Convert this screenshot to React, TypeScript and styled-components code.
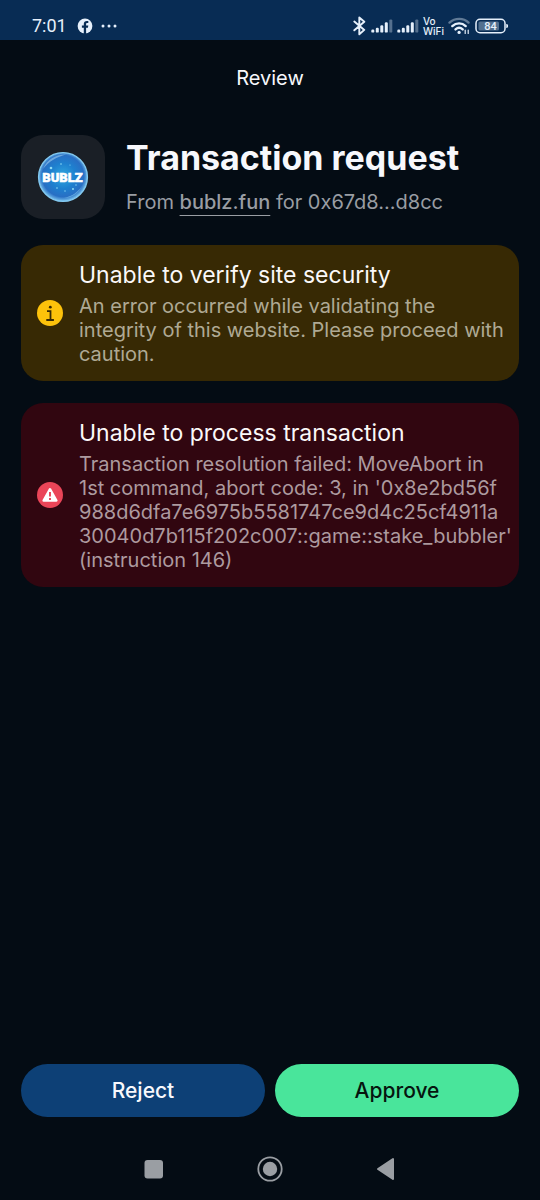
import React from "react";
import styled, { createGlobalStyle } from "styled-components";

const GlobalStyle = createGlobalStyle`
  * { box-sizing: border-box; }
  body {
    margin: 0;
    background: #040c14;
    color: #f7f8fc;
    font-family: Inter, "Liberation Sans", sans-serif;
  }
  h1, h2, p { margin: 0; }
`;

const Screen = styled.div`
  min-height: 100vh;
  display: flex;
  flex-direction: column;
`;

const StatusBar = styled.div`
  height: 40px;
  padding: 11px 31px 0 32px;
  display: flex;
  justify-content: space-between;
  background: #082c54;
  color: #e6f0fb;
  font-family: Roboto, sans-serif;
`;

const StatusGroup = styled.div`
  height: 30px;
  display: flex;
  align-items: center;
  gap: ${(p: { $gap: number }) => p.$gap}px;

  svg { display: block; }
`;

const Clock = styled.span`
  margin-right: 3px;
  font-size: 18px;
  line-height: 30px;
`;

const CallLabel = styled.span`
  font-family: Inter, sans-serif;
  font-size: 10px;
  font-weight: 500;
  line-height: 10px;
`;

const TopBar = styled.header`
  height: 76px;
  display: flex;
  align-items: center;
  justify-content: center;
`;

const TopTitle = styled.h2`
  font-size: 20px;
  font-weight: 400;
  line-height: 24px;
`;

const Content = styled.main`
  flex: 1;
  display: flex;
  flex-direction: column;
  gap: 22px;
  padding: 19px 21px;
`;

const Request = styled.section`
  display: flex;
  align-items: center;
  gap: 21px;
  margin-bottom: 4px;
`;

const AppTile = styled.div`
  flex: none;
  width: 84px;
  height: 84px;
  display: grid;
  place-items: center;
  border-radius: 22px;
  background: #1a1f26;
`;

const RequestText = styled.div`
  display: flex;
  flex-direction: column;
  gap: 10px;
`;

const RequestTitle = styled.h1`
  font-size: 34px;
  font-weight: 700;
  line-height: 40px;
  white-space: nowrap;
`;

const Origin = styled.p`
  color: #999da3;
  font-size: 20px;
  font-variation-settings: "opsz" 24;
  line-height: 28px;
`;

const SiteLink = styled.a`
  color: inherit;
  font-weight: 500;
  text-decoration: underline;
  text-decoration-thickness: 1px;
  text-underline-offset: 6px;
  text-decoration-skip-ink: none;
`;

const Alert = styled.section<{ $tone: "warning" | "danger" }>`
  display: flex;
  align-items: center;
  gap: 16px;
  padding: 15px 16px;
  border-radius: 22px;
  background: ${(p) => (p.$tone === "warning" ? "#372904" : "#310610")};
  color: ${(p) => (p.$tone === "warning" ? "#afa994" : "#ad9a9f")};

  > svg { flex: none; }
`;

const AlertText = styled.div`
  display: flex;
  flex-direction: column;
  gap: 4px;
`;

const AlertTitle = styled.h2`
  color: #fbf8f8;
  font-size: 23px;
  font-weight: 400;
  line-height: 30px;
`;

const AlertBody = styled.p`
  font-size: 20px;
  font-variation-settings: "opsz" 24;
  line-height: 24px;
  white-space: pre;
`;

const Actions = styled.footer`
  display: flex;
  gap: 10px;
  padding: 0 21px;
`;

const ActionButton = styled.button<{ $primary?: boolean }>`
  flex: 1;
  height: 53px;
  padding: 0;
  border: 0;
  border-radius: 27px;
  background: ${(p) => (p.$primary ? "#49e59b" : "#0d4076")};
  color: ${(p) => (p.$primary ? "#06150f" : "#f7f8fc")};
  font: 500 21px/28px Inter, "Liberation Sans", sans-serif;
`;

const SystemNav = styled.nav`
  height: 83px;
  padding-top: 22px;
  display: flex;
  justify-content: center;
  align-items: flex-start;
  gap: 86px;
`;

const NavButton = styled.button`
  width: 30px;
  height: 60px;
  padding: 0;
  border: 0;
  background: none;
  color: #9a9ea3;

  svg { display: block; }
`;

const Signal = () => (
  <svg width="22" height="16" viewBox="0 0 22 16" fill="currentColor" aria-hidden="true">
    <rect x="0.3" y="11.6" width="3" height="3" rx="1.2" />
    <rect x="4.8" y="9.8" width="3" height="4.8" rx="1.2" />
    <rect x="9.3" y="7.2" width="3" height="7.4" rx="1.2" />
    <rect x="13.8" y="4.2" width="3" height="10.4" rx="1.2" />
    <rect x="18.3" y="1.4" width="3" height="13.2" rx="1.2" opacity="0.35" />
  </svg>
);

const BublzLogo = () => (
  <svg width="52" height="52" viewBox="0 0 52 52" role="img" aria-label="Bublz">
    <defs>
      <radialGradient id="bubble" cx="50%" cy="48%" r="52%">
        <stop offset="0" stopColor="#31a9df" />
        <stop offset="0.5" stopColor="#1e80cf" />
        <stop offset="0.82" stopColor="#286fc4" />
        <stop offset="1" stopColor="#7cc5ef" />
      </radialGradient>
    </defs>
    <circle cx="26" cy="26" r="24.4" fill="url(#bubble)" stroke="#83c9f0" strokeWidth="1.4" />
    <path d="M6 18C10 8 19 3.500 29 3.500 20 6 12 10 6 18z" fill="#b4e0f7" opacity="0.5" />
    <path d="M45 35c-4 8-11 12-18 12 8-2 13-5 18-12z" fill="#8dd3f5" opacity="0.5" />
    <g fill="#8fdcf5">
      <circle cx="14" cy="17" r="1.3" /><circle cx="24" cy="13" r="0.8" />
      <circle cx="33" cy="14" r="0.6" /><circle cx="20" cy="37" r="0.8" />
      <circle cx="28" cy="40" r="0.7" /><circle cx="36" cy="38" r="1" />
      <circle cx="39" cy="34" r="0.7" />
    </g>
    <text x="25.500" y="30.500" textAnchor="middle" fontFamily="Roboto, sans-serif" fontSize="13" fontWeight="900" fill="#fff" stroke="#fff" strokeWidth="0.5">BUBLZ</text>
  </svg>
);

const InfoIcon = () => (
  <svg width="26" height="26" viewBox="0 0 26 26" aria-hidden="true">
    <circle cx="13" cy="13" r="13" fill="#fdc20b" />
    <circle cx="13.3" cy="7.2" r="1.4" fill="#372904" />
    <path d="M10 11.2h3.500v8.800M9.300 20h7.600" fill="none" stroke="#372904" strokeWidth="1.8" />
  </svg>
);

const ErrorIcon = () => (
  <svg width="26" height="26" viewBox="0 0 26 26" aria-hidden="true">
    <circle cx="13" cy="13" r="13" fill="#ea4558" />
    <path d="M13 7.2 19.4 18.5H6.6z" fill="#fff" stroke="#fff" strokeWidth="2.4" strokeLinejoin="round" />
    <path d="M13 10v4.4M13 16v2" stroke="#ea4558" strokeWidth="1.9" />
  </svg>
);

export default function App() {
  return (
    <>
      <GlobalStyle />
      <Screen>
        <StatusBar>
          <StatusGroup $gap={7}>
            <Clock>7:01</Clock>
            <svg width="16" height="16" viewBox="0 0 16 16" aria-label="Facebook">
              <circle cx="8" cy="8" r="7.4" fill="currentColor" />
              <path d="M6.8 16V9.8H4.9V7.4h1.9V6.1c0-2.1 1.1-3.2 3.1-3.2.6 0 1.1.1 1.400.1v2h-1c-.9 0-1.2.5-1.2 1.2v1.2h2.200l-.4 2.400H9.1V16z" fill="#082c54" />
            </svg>
            <svg width="18" height="16" viewBox="0 0 18 16" fill="currentColor" aria-hidden="true">
              <circle cx="3" cy="8" r="1.5" /><circle cx="9" cy="8" r="1.5" /><circle cx="15" cy="8" r="1.5" />
            </svg>
          </StatusGroup>
          <StatusGroup $gap={4}>
            <svg width="14" height="20" viewBox="0 0 14 20" fill="none" stroke="currentColor" strokeWidth="1.9" strokeLinejoin="round" strokeLinecap="round" aria-label="Bluetooth">
              <path d="M1.300 5.500 11.300 13.900 6.300 18.300V1.500l5 4.300-10 8.500" />
            </svg>
            <Signal />
            <Signal />
            <CallLabel>Vo<br />WiFi</CallLabel>
            <svg width="23" height="18" viewBox="0 0 23 18" fill="none" stroke="currentColor" strokeWidth="2.4" strokeLinecap="round" aria-label="Wi-Fi">
              <path d="M1.5 5.600C7 .6 15.500 .6 20.500 5.600" opacity="0.4" />
              <path d="M4.300 9.100c4-3.700 9.600-3.700 13.400 0M7.500 12.400c2.200-2 5-2 7.200 0" />
              <circle cx="11.100" cy="15.400" r="1.600" fill="currentColor" stroke="none" />
              <path d="M17.200 13v3.500M20.200 16.500v-3.500" strokeWidth="1.200" />
            </svg>
            <svg width="34" height="16" viewBox="0 0 34 16" aria-label="Battery 84%">
              <rect x="1" y="1.300" width="29" height="13.400" rx="4" fill="none" stroke="currentColor" strokeWidth="1.500" />
              <rect x="3.500" y="3.500" width="20.500" height="9" rx="1.500" fill="#52708f" />
              <path d="M31.800 6.300c1.100.5 1.100 2.900 0 3.400z" fill="currentColor" stroke="currentColor" />
              <text x="15.500" y="12" textAnchor="middle" fontFamily="Roboto, sans-serif" fontSize="11" fontWeight="500" fill="currentColor">84</text>
            </svg>
          </StatusGroup>
        </StatusBar>

        <TopBar><TopTitle>Review</TopTitle></TopBar>

        <Content>
          <Request>
            <AppTile><BublzLogo /></AppTile>
            <RequestText>
              <RequestTitle>Transaction request</RequestTitle>
              <Origin>From <SiteLink href="#site">bublz.fun</SiteLink> for 0x67d8...d8cc</Origin>
            </RequestText>
          </Request>

          <Alert $tone="warning">
            <InfoIcon />
            <AlertText>
              <AlertTitle>Unable to verify site security</AlertTitle>
              <AlertBody>{"An error occurred while validating the\nintegrity of this website. Please proceed with\ncaution."}</AlertBody>
            </AlertText>
          </Alert>

          <Alert $tone="danger">
            <ErrorIcon />
            <AlertText>
              <AlertTitle>Unable to process transaction</AlertTitle>
              <AlertBody>{"Transaction resolution failed: MoveAbort in\n1st command, abort code: 3, in '0x8e2bd56f\n988d6dfa7e6975b5581747ce9d4c25cf4911a\n30040d7b115f202c007::game::stake_bubbler'\n(instruction 146)"}</AlertBody>
            </AlertText>
          </Alert>
        </Content>

        <Actions>
          <ActionButton type="button">Reject</ActionButton>
          <ActionButton type="button" $primary>Approve</ActionButton>
        </Actions>

        <SystemNav aria-label="System">
          <NavButton type="button" aria-label="Recent apps">
            <svg width="30" height="60" viewBox="0 0 30 60"><rect x="5.500" y="21" width="18.500" height="18.500" rx="3" fill="currentColor" /></svg>
          </NavButton>
          <NavButton type="button" aria-label="Home">
            <svg width="30" height="60" viewBox="0 0 30 60">
              <circle cx="15" cy="30" r="11.700" fill="none" stroke="currentColor" strokeWidth="1.800" />
              <circle cx="15" cy="30" r="7.200" fill="currentColor" />
            </svg>
          </NavButton>
          <NavButton type="button" aria-label="Back">
            <svg width="30" height="60" viewBox="0 0 30 60"><path d="M7 30 22 20v20z" fill="currentColor" stroke="currentColor" strokeWidth="2" strokeLinejoin="round" /></svg>
          </NavButton>
        </SystemNav>
      </Screen>
    </>
  );
}
